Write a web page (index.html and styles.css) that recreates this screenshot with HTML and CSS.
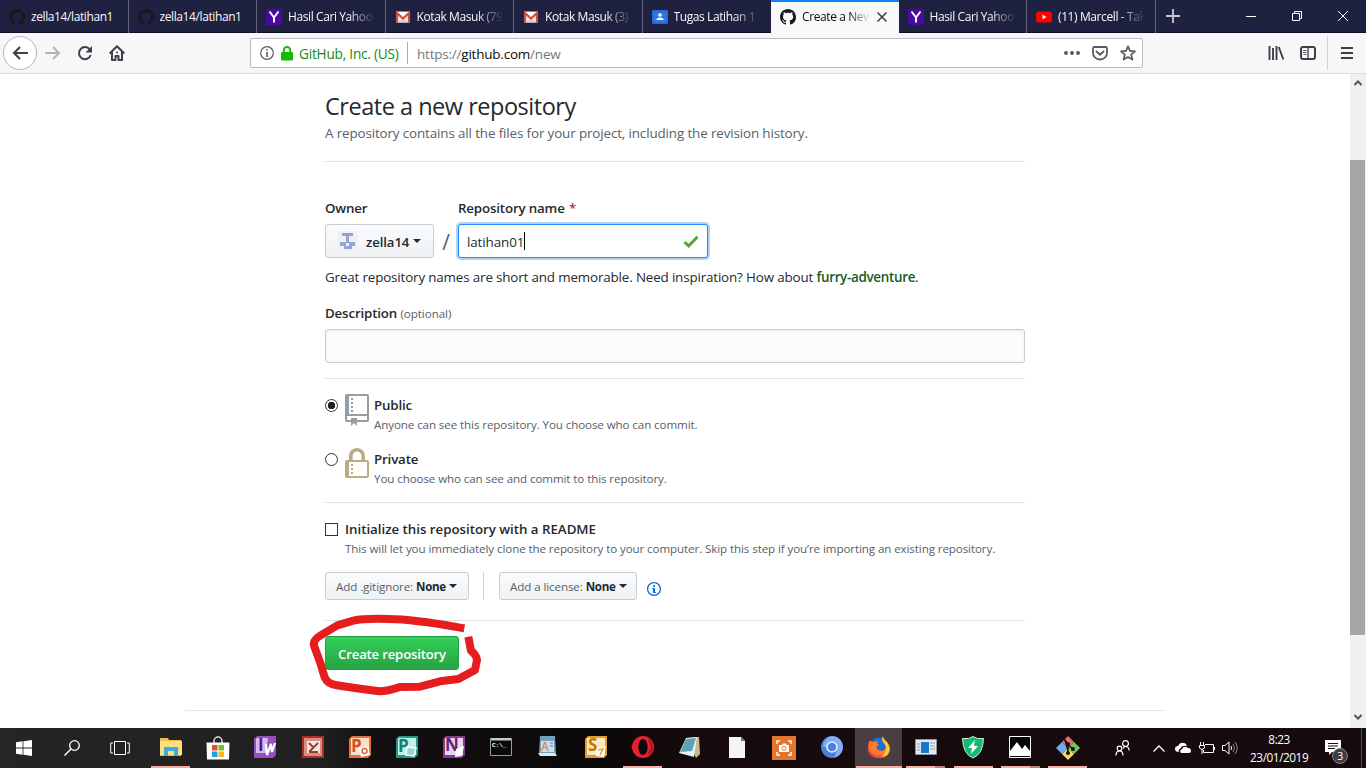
FILE: index.html
```html
<!DOCTYPE html>
<html lang="en">
<head>
<meta charset="utf-8">
<title>Create a New Repository</title>
<link rel="stylesheet" href="styles.css">
</head>
<body>
<svg class="defs" width="0" height="0">
  <symbol id="mark" viewBox="0 0 16 16"><path d="M8 0C3.58 0 0 3.58 0 8c0 3.54 2.29 6.53 5.47 7.59.4.07.55-.17.55-.38 0-.19-.01-.82-.01-1.49-2.01.37-2.53-.49-2.69-.94-.09-.23-.48-.94-.82-1.13-.28-.15-.68-.52-.01-.53.63-.01 1.08.58 1.23.82.72 1.21 1.87.87 2.33.66.07-.52.28-.87.51-1.07-1.78-.2-3.64-.89-3.64-3.95 0-.87.31-1.59.82-2.15-.08-.2-.36-1.02.08-2.12 0 0 .67-.21 2.2.82.64-.18 1.32-.27 2-.27.68 0 1.36.09 2 .27 1.53-1.04 2.2-.82 2.2-.82.44 1.1.16 1.92.08 2.12.51.56.82 1.27.82 2.15 0 3.07-1.87 3.75-3.65 3.95.29.25.54.73.54 1.48 0 1.07-.01 1.93-.01 2.2 0 .21.15.46.55.38A8.013 8.013 0 0 0 16 8c0-4.42-3.58-8-8-8z"/></symbol>
  <symbol id="yahoo" viewBox="0 0 16 16"><path fill="#4b0a9e" d="M0 0h16v16H0z"/><path d="M3.500 2.500 8 8.500l4.500-6M8 8v5.500" fill="none" stroke="#fff" stroke-width="1.900"/></symbol>
  <symbol id="gmail" viewBox="0 0 16 16"><path fill="#ececec" d="M1 2.500h14v11H1z"/><path fill="#fff" d="m1 3 7 6 7-6z"/><path fill="#d5d5d5" d="m3 13.500 5-5 5 5z"/><path d="M2 13.500V4l6 5.500L14 4v9.500" fill="none" stroke="#d54b3d" stroke-width="2.200"/></symbol>
</svg>

<header class="tabs">
  <div class="tab"><svg class="fav dark"><use href="#mark"/></svg><span class="tab-title full">zella14/latihan1</span></div>
  <div class="tab"><svg class="fav dark"><use href="#mark"/></svg><span class="tab-title full">zella14/latihan1</span></div>
  <div class="tab"><svg class="fav"><use href="#yahoo"/></svg><span class="tab-title">Hasil Cari Yahoo</span></div>
  <div class="tab"><svg class="fav"><use href="#gmail"/></svg><span class="tab-title">Kotak Masuk (79)</span></div>
  <div class="tab"><svg class="fav"><use href="#gmail"/></svg><span class="tab-title">Kotak Masuk (3)</span></div>
  <div class="tab last"><svg class="fav" viewBox="0 0 16 16"><rect y="1" width="16" height="14" rx="1.500" fill="#3367d6"/><rect x="2" y="3" width="12" height="10" fill="#2a7be8"/><circle cx="8" cy="6" r="1.800" fill="#fff"/><path fill="#fff" d="M4.300 11c0-3.500 7.400-3.500 7.400 0z"/></svg><span class="tab-title">Tugas Latihan 1</span></div>
  <div class="tab active"><svg class="fav dark"><use href="#mark"/></svg><span class="tab-title">Create a New</span><svg class="close" viewBox="0 0 10 10"><path d="m.5.5 9 9m0-9-9 9" stroke="#3c3c40" stroke-width="1.500"/></svg></div>
  <div class="tab"><svg class="fav"><use href="#yahoo"/></svg><span class="tab-title">Hasil Cari Yahoo</span></div>
  <div class="tab"><svg class="fav" viewBox="0 0 16 16"><rect y="2.500" width="16" height="11" rx="2.500" fill="#f00"/><path fill="#fff" d="m6.500 5.500 4 2.500-4 2.500z"/></svg><span class="tab-title">(11) Marcell - Tak</span></div>
  <svg class="plus" viewBox="0 0 14 14"><path d="M7 0v14M0 7h14" stroke="#c9c9d4" stroke-width="1.800"/></svg>
  <div class="window-buttons">
    <svg viewBox="0 0 12 12"><path d="M1 6.500h10" stroke="#fff"/></svg>
    <svg viewBox="0 0 12 12"><path d="M1.500 3.500h7v7h-7zM3.500 3.500v-2h7v7h-2" fill="none" stroke="#fff"/></svg>
    <svg viewBox="0 0 12 12"><path d="m1 1 10 10m0-10L1 11" stroke="#fff"/></svg>
  </div>
</header>

<nav class="toolbar">
  <span class="back"><svg width="16" height="14" viewBox="0 0 16 14"><path d="M16 7H2M8 1 2 7l6 6" fill="none" stroke="#3f3f44" stroke-width="2"/></svg></span>
  <svg class="forward" width="16" height="14" viewBox="0 0 16 14"><path d="M0 7h14M8 1l6 6-6 6" fill="none" stroke="#b5b5b8" stroke-width="2"/></svg>
  <svg class="reload" width="16" height="16" viewBox="0 0 16 16"><path d="M12.800 4.500A6 6 0 1 0 13.700 10" fill="none" stroke="#3f3f44" stroke-width="2"/><path d="M15 1v6.500H8.500z" fill="#3f3f44"/></svg>
  <svg class="home" width="16" height="16" viewBox="0 0 16 16"><path d="M.7 8.500 8 1.200l7.300 7.300M3 7v8h3.500v-4h3v4H13V7" fill="none" stroke="#3f3f44" stroke-width="2" stroke-linejoin="round"/><circle cx="8" cy="7.500" r="1" fill="#3f3f44"/></svg>
  <div class="urlbar">
    <svg class="site-info" width="14" height="14" viewBox="0 0 14 14"><circle cx="7" cy="7" r="6.300" fill="none" stroke="#5b5b5f" stroke-width="1.200"/><path d="M7 6v5M7 3v1.600" stroke="#5b5b5f" stroke-width="1.600"/></svg>
    <svg class="padlock" width="12" height="15" viewBox="0 0 12 15"><path d="M2.800 7V4.300a3.200 3.200 0 0 1 6.400 0V7" fill="none" stroke="#12bc00" stroke-width="2"/><rect y="6" width="12" height="8.500" rx="1.300" fill="#12bc00"/></svg>
    <span class="identity">GitHub, Inc. (US)</span>
    <span class="url">https://<b>github.com</b>/new</span>
    <svg class="dots" width="16" height="4" viewBox="0 0 16 4"><g fill="#5b5b5f"><circle cx="2" cy="2" r="2"/><circle cx="8" cy="2" r="2"/><circle cx="14" cy="2" r="2"/></g></svg>
    <svg class="pocket" width="16" height="15" viewBox="0 0 16 15"><path d="M2.500 1h11Q15 1 15 2.500V7A7 6.500 0 0 1 1 7V2.500Q1 1 2.500 1z" fill="none" stroke="#5b5b5f" stroke-width="1.800"/><path d="m4.500 5.500 3.500 3.300 3.500-3.300" fill="none" stroke="#5b5b5f" stroke-width="1.900" stroke-linecap="round"/></svg>
    <svg class="star" width="16" height="16" viewBox="0 0 16 16"><path d="m8 1.300 2 4.600 5 .5-3.800 3.300 1.200 4.900L8 12l-4.400 2.600 1.200-4.900L1 6.400l5-.5z" fill="none" stroke="#5b5b5f" stroke-width="1.700" stroke-linejoin="round"/></svg>
  </div>
  <svg class="library" width="16" height="14" viewBox="0 0 16 14"><path d="M1.500 0v14M5 2v12M8.500 0v14M10.800 1l4.500 12.500" stroke="#3f3f44" stroke-width="1.900"/></svg>
  <svg class="sidebar" width="16" height="14" viewBox="0 0 16 14"><rect x="1" y="1" width="14" height="12" rx="2" fill="none" stroke="#3f3f44" stroke-width="2"/><path d="M8 1v12" stroke="#3f3f44" stroke-width="1.300"/><path d="M3 4.500h3.500M3 6.500h3.500M3.500 8.500h3" stroke="#3f3f44" stroke-width=".8"/></svg>
  <span class="menu"><svg width="12" height="12" viewBox="0 0 12 12"><path d="M0 1h12M0 6h12M0 11h12" stroke="#3f3f44" stroke-width="2"/></svg></span>
</nav>

<div class="viewport">
  <main class="page">
    <div class="column">
      <h1 class="title">Create a new repository</h1>
      <p class="lead">A repository contains all the files for your project, including the revision history.</p>
      <div class="rule rule-head"></div>

      <div class="name-row">
        <div class="owner">
          <label class="label">Owner</label>
          <div class="btn owner-btn"><svg width="20" height="20" viewBox="0 0 20 20"><path fill="#f0f0f0" d="M0 0h20v20H0z"/><path fill="#95a3dc" d="M4 2h11v3h-4v6h6v4h-3v3H6v-3H2v-4h6V5H4z"/><path fill="#f0f0f0" d="M8 12h3v3H8z"/></svg><span>zella14</span><i class="caret"></i></div>
        </div>
        <span class="slash">/</span>
        <div class="repo">
          <label class="label repo-label">Repository name <em>*</em></label>
          <div class="field focus"><span class="value">latihan01</span><i class="cursor"></i><svg class="tick" width="16" height="13" viewBox="0 0 16 13"><path d="m1.500 7 4.200 4L14.500 1.700" fill="none" stroke="#55a532" stroke-width="3"/></svg></div>
        </div>
      </div>
      <p class="note">Great repository names are short and memorable. Need inspiration? How about <b>furry-adventure</b>.</p>

      <label class="label desc-label">Description <small>(optional)</small></label>
      <div class="field desc"></div>
      <div class="rule rule-desc"></div>

      <div class="option">
        <i class="radio checked"></i>
        <svg class="kind" viewBox="0 0 12 16"><path fill="#959da5" d="M4 9H3V8h1v1zm0-3H3v1h1V6zm0-2H3v1h1V4zm0-2H3v1h1V2zm8-1v12c0 .55-.45 1-1 1H6v2l-1.500-1.500L3 16v-2H1c-.55 0-1-.45-1-1V1c0-.55.45-1 1-1h10c.55 0 1 .45 1 1zm-1 10H1v2h2v-1h3v1h5v-2zm0-10H2v9h9V1z"/></svg>
        <div><div class="opt-title">Public</div><p class="hint">Anyone can see this repository. You choose who can commit.</p></div>
      </div>
      <div class="option second">
        <i class="radio"></i>
        <svg class="kind" viewBox="0 0 12 16"><path fill="#b9ab82" d="M4 13H3v-1h1v1zm8-6v7c0 .55-.45 1-1 1H1c-.55 0-1-.45-1-1V7c0-.55.45-1 1-1h1V4c0-2.200 1.800-4 4-4s4 1.800 4 4v2h1c.55 0 1 .45 1 1zM3.800 6h4.410V4c0-1.220-.98-2.200-2.200-2.200-1.220 0-2.200.98-2.200 2.200v2H3.800zM11 7H2v7h9V7zM4 8H3v1h1V8zm0 2H3v1h1v-1z"/></svg>
        <div><div class="opt-title">Private</div><p class="hint">You choose who can see and commit to this repository.</p></div>
      </div>
      <div class="rule rule-options"></div>

      <div class="readme">
        <i class="checkbox"></i>
        <div><div class="opt-title">Initialize this repository with a README</div><p class="hint">This will let you immediately clone the repository to your computer. Skip this step if you’re importing an existing repository.</p></div>
      </div>
      <div class="extras">
        <div class="btn small ignore"><span>Add .gitignore:</span> <b>None</b><i class="caret"></i></div>
        <i class="bar"></i>
        <div class="btn small license"><span>Add a license:</span> <b>None</b><i class="caret"></i></div>
        <svg class="info" viewBox="0 0 14 16"><path fill="#0366d6" d="M6.300 5.690a.942.942 0 0 1-.28-.7c0-.28.09-.52.28-.7.19-.18.42-.28.7-.28.28 0 .52.09.7.28.18.19.28.42.28.7 0 .28-.09.52-.28.7a1 1 0 0 1-.7.3c-.28 0-.52-.11-.7-.3zM8 7.990c-.02-.25-.11-.48-.31-.69-.2-.19-.42-.3-.69-.31H6c-.27.02-.48.13-.69.31-.2.2-.3.44-.31.69h1v3c.02.27.11.5.31.69.2.2.42.31.69.31h1c.27 0 .48-.11.69-.31.2-.19.3-.42.31-.69H8V7.980v.01zM7 2.300c-3.140 0-5.700 2.540-5.700 5.680 0 3.140 2.560 5.700 5.700 5.700s5.700-2.550 5.700-5.700c0-3.150-2.560-5.690-5.700-5.690v.01zM7 .98c3.860 0 7 3.140 7 7s-3.140 7-7 7-7-3.120-7-7 3.140-7 7-7z"/></svg>
      </div>
      <div class="rule rule-extras"></div>
      <div class="create">Create repository</div>
    </div>
    <div class="rule footer-rule"></div>
  </main>
  <aside class="scrollbar">
    <svg width="8" height="6" viewBox="0 0 8 6"><path d="m.5 5 3.500-3.700L7.500 5" fill="none" stroke="#505050" stroke-width="1.900"/></svg>
    <i class="thumb"></i>
    <svg width="8" height="6" viewBox="0 0 8 6"><path d="M.5 1 4 4.700 7.500 1" fill="none" stroke="#505050" stroke-width="1.900"/></svg>
  </aside>
</div>

<svg class="scribble" viewBox="0 0 600 315"><path d="M493 385C430 374 350 358 265 357Q190 355 160 362L112 376 62 406Q38 420 42 437L62 492 74 532Q82 552 110 556L180 566 238 574Q262 574 300 561L360 560 420 544 475 537 525 510 531 480Q530 466 513 452L505 410" fill="none" stroke="#e61c1d" stroke-width="24" stroke-linejoin="round"/></svg>

<footer class="taskbar">
  <span class="sys"><svg width="16" height="16" viewBox="0 0 16 16"><path fill="#fff" d="m0 2.200 6.600-.9v6.300H0zM7.400 1.200 16 0v7.600H7.400zM0 8.400h6.600v6.300L0 13.800zM7.400 8.400H16V16l-8.600-1.200z"/></svg></span>
  <span class="sys"><svg width="16" height="16" viewBox="0 0 16 16"><circle cx="10.500" cy="5.500" r="4.800" fill="none" stroke="#fff" stroke-width="1.300"/><path d="M7 9 .5 15.500" stroke="#fff" stroke-width="1.400"/></svg></span>
  <span class="sys"><svg width="20" height="14" viewBox="0 0 20 14"><path d="M4.500.5h11v13h-11zM3 2H.7v10H3M17 2h2.300v10H17" fill="none" stroke="#fff"/></svg></span>
  <div class="apps">
    <span class="app open"><svg viewBox="0 0 22 22"><path fill="#f0bd44" d="M0 2h8l1 2h12v16H0z"/><path fill="#fbdf83" d="M0 5h22v14H0z"/><path fill="#3fa9d8" d="M4 11h14v9h-4v-5H8v5H4z"/></svg></span>
    <span class="app"><svg class="store" viewBox="0 0 24 24"><path d="M8 7V5a4 4 0 0 1 8 0v2" fill="none" stroke="#ddd" stroke-width="1.500"/><path fill="#fff" d="M.5 6.500h23l-.5 17H1z"/><path fill="#e94f26" d="M6 9h5.500v5.500H6z"/><path fill="#7fb928" d="M12.500 9H18v5.500h-5.500z"/><path fill="#1ba1e2" d="M6 15.500h5.500V21H6z"/><path fill="#fdb913" d="M12.500 15.500H18V21h-5.500z"/></svg></span>
    <span class="app"><svg viewBox="0 0 22 22"><path fill="#9550bd" d="M3 0h19v19l-3 3H0V3z"/><path fill="#dab6ef" d="M2 2h12l-2 15H2z"/><text x="4" y="15" class="ico" fill="#4b1d80">I</text><path d="m12 8 1 11 4-11 1 8 3-9" fill="none" stroke="#fff" stroke-width="2.200"/></svg></span>
    <span class="app"><svg viewBox="0 0 22 22"><path fill="#ad2f2a" d="M0 0h22v22H0z"/><path fill="#d98c84" d="M2 2h18v18H2z"/><path fill="#f6e4df" d="M5 5h13v12H5z"/><path d="m7 7 4 4m-4 5 9-9M7 16h9" stroke="#a9322c" stroke-width="1.800"/></svg></span>
    <span class="app"><svg viewBox="0 0 22 22"><path fill="#e4703a" d="M3 0h19v19l-3 3H0V3z"/><path fill="#fbe0cf" d="M2 2h18v17H2z"/><text x="2" y="16" class="ico" fill="#d3511a">P</text><path d="m10 12 9-2 2 9-9 2z" fill="#fff"/><circle cx="15.500" cy="15" r="2.500" fill="none" stroke="#e0683a" stroke-width="1.500"/></svg></span>
    <span class="app"><svg viewBox="0 0 22 22"><path fill="#1b9a88" d="M3 0h19v19l-3 3H0V3z"/><path fill="#c4eee4" d="M2 2h18v17H2z"/><text x="2" y="16" class="ico" fill="#0e8277">P</text><path d="m11 11 9 1-2 8-8-1z" fill="#8fd8ca" stroke="#fff" stroke-width="1.500"/></svg></span>
    <span class="app"><svg viewBox="0 0 22 22"><path fill="#843b93" d="M3 0h19v19l-3 3H0V3z"/><path fill="#ead4f0" d="M2 2h18v17H2z"/><text x="2" y="15" class="ico" fill="#632473">N</text><path d="m13 13 8-3-2 10-7 1z" fill="#fff"/></svg></span>
    <span class="app"><svg viewBox="0 0 22 22"><path fill="#090909" stroke="#999" d="M.5 2.500h21v17H.5z"/><path fill="#c9c9c9" d="M1 2h20v2.500H1z"/><text x="2" y="11" class="prompt" fill="#fff">C:\_</text></svg></span>
    <span class="app"><svg viewBox="0 0 22 22"><path fill="#759ebf" d="M3 0h15l1 18H2z"/><path fill="#c9e1f2" d="M4 5h13v11H4z"/><path fill="#dde8ef" d="M1 17h17l2 3H3z"/><text x="4" y="15" class="letter" fill="#dc8b41">A</text><path d="M13 7h3M13 10h3" stroke="#5485b0"/></svg></span>
    <span class="app"><svg viewBox="0 0 22 22"><path fill="#e59b25" d="M3 0h19v19l-3 3H0V3z"/><path fill="#fde9bf" d="M2 2h18v17H2z"/><text x="3" y="15" class="ico" fill="#c87600">S</text><path d="m12 12 9-2-2 11-8-1z" fill="#fff"/><path d="m13 14 5-1-3 6" fill="none" stroke="#e8a33c" stroke-width="1.500"/></svg></span>
    <span class="app open"><svg viewBox="0 0 22 22"><path fill="#e5222e" fill-rule="evenodd" d="M11 0a11 11 0 1 0 0 22 11 11 0 0 0 0-22zM11 3c3 0 4.600 4 4.600 8S14 19 11 19s-4.600-4-4.600-8S8 3 11 3z"/><path d="M16.500 3.500q7 7.500 0 15" fill="none" stroke="#a40f22" stroke-width="1.600"/></svg></span>
    <span class="app"><svg viewBox="0 0 22 22"><path fill="#c9b98a" d="m8 2 12-1 1 17-4 4z"/><path fill="#e5f4f6" d="m7 2 11-1-3 20-15-4z"/><path fill="#5ea3b2" d="m7 3 10-1-4 13-12 1z"/></svg></span>
    <span class="app"><svg viewBox="0 0 22 22"><path fill="#f5f5f5" d="M3 1h12l4 4v17H3z"/><path fill="#777" d="M15 1v4h4z"/></svg></span>
    <span class="app"><svg class="store" viewBox="0 0 24 24"><path fill="#e3762c" d="M0 0h24v24H0z"/><path d="M5 8V5h3m8 0h3v3m0 8v3h-3m-8 0H5v-3" fill="none" stroke="#fff" stroke-width="1.400"/><path fill="#fff" d="M7 9h3l1-1.500h3L15 9h2v7H7z"/><circle cx="12" cy="12.400" r="2" fill="#fff" stroke="#e3762c"/></svg></span>
    <span class="app"><svg viewBox="0 0 22 22"><circle cx="11" cy="11" r="11" fill="#4c80dc"/><path fill="#83aef3" d="M11 0a11 11 0 0 1 2 21.800L17 11H2A11 11 0 0 1 11 0z"/><circle cx="11" cy="11" r="5" fill="#4c7fdd" stroke="#e6effc" stroke-width="1.600"/></svg></span>
    <span class="app open current"><svg viewBox="0 0 22 22"><circle cx="11" cy="10" r="8.500" fill="#1b6fd0"/><path fill="#ff7a2b" d="M2 4q1 2 4 2 2-1 4-1-2 2 1 4-3 1-2 4 3 3 7 1 3-3 2-8 4 3 4 7c0 6-5 9-11 9S0 18 0 12q0-5 2-8z"/><path fill="#f83d50" d="M2 4q-3 10 3 14 6 3 11 0-3 4-7 4Q0 20 0 12q0-5 2-8z"/><path fill="#ffc93a" d="M15 0q0 3 4 6 5 7 0 13-3 2-5 1 4-3 4-8 0-3-3-6-2-3 0-6z"/></svg></span>
    <span class="app open multi"><svg viewBox="0 0 22 22"><path fill="#e5e8eb" stroke="#8c959b" d="M.5 3.500h21v15H.5z"/><path fill="#1779cb" d="M6 6h8v11H6z"/><path d="M2 8h3M2 11h3M2 14h3m10-7h5m-5 3h5m-5 3h5" stroke="#929fa8"/></svg></span>
    <span class="app open"><svg viewBox="0 0 22 22"><path fill="#16b973" stroke="#c1f3dc" d="M11 .5q4 3 10.500 2Q21 18 11 22 1 18 .5 2.500 7 3.500 11 .5z"/><path fill="#fff" d="M13 4 6 12h4l-1 6 7-8h-4z"/></svg></span>
    <span class="app open multi"><svg viewBox="0 0 22 22"><path fill="#050505" stroke="#fff" d="M.5.500h21v21H.5z"/><path fill="#fff" d="m1 15 7-9 5 7 3-4 5 6v5H1z"/></svg></span>
    <span class="app open"><svg class="store" viewBox="0 0 24 24"><path fill="#ed6c70" d="m12 0 6 6-6 6-6-6z"/><path fill="#71a9f5" d="m6 6 6 6-6 6-6-6z"/><path fill="#77c957" d="m18 6 6 6-6 6-6-6z"/><path fill="#f7d85c" d="m12 12 6 6-6 6-6-6z"/><path d="m8 3 4 5v9M12 9l5 4" stroke="#141414" stroke-width="1.500"/><g fill="#141414"><circle cx="12" cy="8" r="2"/><circle cx="12" cy="17" r="2"/><circle cx="17" cy="13" r="2"/></g></svg></span>
  </div>
  <div class="tray">
    <svg class="people" width="16" height="16" viewBox="0 0 16 16"><g fill="none" stroke="#fff" stroke-width="1.200"><circle cx="10.500" cy="3.500" r="2.900"/><circle cx="4.500" cy="8.500" r="2.300"/><path d="M1 15.500q0-4.500 3.500-4.500T8 15.500M8 8.500q1-2 2.500-2 3.500 0 3.500 4"/></g></svg>
    <svg class="up" width="12" height="7" viewBox="0 0 12 7"><path d="m.5 6.500 5.500-5.500 5.500 5.500" fill="none" stroke="#fff" stroke-width="1.300"/></svg>
    <svg class="cloud" width="16" height="12" viewBox="0 0 16 12"><path fill="#fff" d="M4 10Q0 10 0 7q0-3 3-3Q5 0 9 1q2 0 3 3-5-1-7 3-2 0-1 3zM6 11q-2-3 1-4 2-4 6-1 3 0 3 3 0 2-2 2z"/></svg>
    <svg class="battery" width="16" height="12" viewBox="0 0 16 12"><path d="M6 2.500h8.500v8H4.500V8M15.500 5v3M1.500 0v3m3-3v3M.5 3.500h5V6L3 7.500.5 6zM3 7v5" fill="none" stroke="#fff"/></svg>
    <svg class="sound" width="17" height="14" viewBox="0 0 17 14"><path d="M.5 4.500H3l4-3.500v12L3 9.500H.5z" fill="none" stroke="#fff"/><path d="M9 5q1.500 2 0 4" fill="none" stroke="#fff"/><path d="M11 3q3 4 0 8m2-10q4.500 6 0 12" fill="none" stroke="#888"/></svg>
    <div class="clock"><span>8:23</span><span>23/01/2019</span></div>
    <div class="notify"><svg width="16" height="16" viewBox="0 0 16 16"><path fill="#fff" d="M0 0h16v12H7l-3 3v-3H0z"/><path d="M3 3.500h10M3 6h10M3 8.500h7" stroke="#111"/></svg><span class="badge">3</span></div>
    <i class="peek"></i>
  </div>
</footer>
</body>
</html>
```

FILE: styles.css
```css
* { box-sizing: border-box; }
body { margin: 0; width: 1366px; height: 768px; overflow: hidden; background: #fff; color: #24292e; font-family: "Open Sans", "Noto Sans", sans-serif; font-size: 13px; display: flex; flex-direction: column; position: relative; }
p, h1 { margin: 0; font-weight: 400; white-space: nowrap; }
svg { flex: none; display: block; overflow: visible; }
i, em { font-style: normal; }
.defs { position: absolute; }

.tabs { flex: none; height: 33px; background: #1f2140; border-bottom: 1px solid #0d0e24; display: flex; align-items: center; color: #f9f9fa; }
.tab { width: 128.500px; height: 33px; flex: none; padding: 2px 8px 0 9px; display: flex; align-items: center; gap: 6px; border-right: 1px solid #65667b; }
.tab.last { border-right-color: transparent; }
.tab.active { background: #f9f9fb; color: #0c0c0d; border: 0; border-top: 2px solid #0a84ff; padding-top: 0; padding-right: 12px; width: 127.500px; }
.fav { width: 16px; height: 16px; }
.dark { fill: #18191d; }
.tab-title { flex: 1; min-width: 0; overflow: hidden; white-space: nowrap; font-size: 12px; letter-spacing: -.4px; line-height: 18px; -webkit-mask-image: linear-gradient(90deg, #000 68%, transparent 98%); mask-image: linear-gradient(90deg, #000 68%, transparent 98%); }
.tab-title.full { -webkit-mask-image: none; mask-image: none; }
.close { width: 10px; height: 10px; }
.plus { width: 14px; height: 14px; margin-left: 10px; }
.window-buttons { margin-left: auto; margin-right: 17px; display: flex; gap: 34px; }
.window-buttons svg { width: 12px; height: 12px; }

.toolbar { flex: none; height: 41px; background: #f7f7f9; border-bottom: 1px solid #dcdcde; display: flex; align-items: center; padding-left: 3px; }
.back { width: 34px; height: 34px; border: 1px solid #b4b4b7; border-radius: 50%; background: #fff; display: flex; align-items: center; justify-content: center; }
.forward { margin-left: 8px; }
.reload { margin-left: 16px; }
.home { margin-left: 16px; }
.urlbar { margin-left: 125px; width: 893px; height: 30px; background: #fff; border: 1px solid #bababc; border-radius: 2px; display: flex; align-items: center; padding: 0 6px 0 9px; white-space: nowrap; }
.padlock { margin-left: 7px; }
.identity { margin-left: 6px; width: 109px; height: 22px; line-height: 24px; border-right: 1px solid #84ce84; color: #138a13; font-size: 13.600px; letter-spacing: -.2px; }
.url { margin-left: 9px; padding-top: 2px; color: #77777b; font-size: 13.500px; letter-spacing: -.22px; }
.url b { color: #0c0c0d; font-weight: 400; }
.dots { margin-left: auto; }
.pocket { margin-left: 12px; }
.star { margin-left: 12px; }
.library { margin-left: 125px; }
.sidebar { margin-left: 16px; }
.menu { margin-left: 11px; height: 34px; border-left: 1px solid #d5d5d8; padding-left: 13px; display: flex; align-items: center; }

.viewport { height: 654px; display: flex; }
.page { width: 1350px; }
.column { width: 700px; margin: 0 auto; padding-top: 16px; }
.rule { height: 1px; background: #dfe2e5; }
.title { font-size: 23.500px; line-height: 32px; letter-spacing: -.48px; }
.lead { margin-top: 1px; line-height: 20px; color: #586069; font-size: 13.400px; letter-spacing: -.125px; }
.rule-head { margin-top: 18px; }
.name-row { display: flex; align-items: flex-end; margin-top: 36px; }
.label, .opt-title { display: block; height: 20px; line-height: 20px; font-weight: 600; font-size: 13.300px; letter-spacing: -.15px; white-space: nowrap; }
.readme .opt-title { letter-spacing: -.02px; }
.btn, .field { height: 34px; border: 1px solid #c9cdd1; border-radius: 3px; display: flex; align-items: center; }
.owner .btn, .repo .field { margin-top: 6px; }
.btn { background: linear-gradient(#fafbfc, #eff3f6 90%); font-weight: 600; }
.owner-btn { width: 109px; padding-left: 12px; font-size: 13.200px; letter-spacing: -.1px; }
.owner-btn span { margin-left: 8px; padding-top: 1px; }
.caret { border: 4px solid transparent; border-top-color: #24292e; border-bottom: 0; margin-left: 4px; }
.slash { width: 24px; text-align: center; font-size: 21px; line-height: 31px; color: #586069; }
.repo-label em { color: #cb2431; margin-left: 1px; }
.field { background: #fafbfc; box-shadow: inset 0 1px 2px rgba(27, 31, 35, .075); }
.field.focus { width: 250px; border-color: #2188ff; background: #fff; box-shadow: 0 0 0 2px rgba(3, 102, 214, .3); padding: 0 8px; font-size: 13.400px; letter-spacing: -.1px; }
.value { padding-top: 2px; }
.cursor { width: 1px; height: 18px; background: #000; }
.tick { margin-left: auto; }
.note { margin-top: 9px; line-height: 20px; font-size: 13.400px; letter-spacing: -.155px; }
.note b { color: #165c26; font-weight: 600; letter-spacing: -.3px; }
.desc-label { margin-top: 16px; }
.desc-label small { color: #586069; font-size: 11.600px; font-weight: 400; letter-spacing: -.05px; }
.desc { margin-top: 6px; }
.rule-desc { margin-top: 15px; }
.option { display: flex; margin-top: 15px; height: 40px; }
.option.second { margin-top: 14px; }
.radio { width: 13px; height: 13px; border: 1px solid #333; border-radius: 50%; margin-top: 5px; flex: none; }
.radio.checked { background: radial-gradient(circle, #222 0 3.500px, transparent 4px); }
.kind { width: 24px; height: 32px; margin: 0 5px 0 7px; }
.option .opt-title { margin-top: 1px; }
.hint { line-height: 20px; color: #586069; font-size: 11.600px; letter-spacing: -.1px; }
.rule-options { margin-top: 14px; }
.readme { display: flex; margin-top: 16px; gap: 7px; height: 40px; }
.checkbox { width: 13px; height: 13px; border: 1px solid #333; margin-top: 4px; flex: none; }
.extras { display: flex; margin-top: 13px; height: 28px; }
.btn.small { height: 28px; font-size: 11.600px; letter-spacing: -.1px; padding-left: 10px; white-space: pre; }
.btn.small span { color: #586069; font-weight: 400; }
.btn b { font-weight: 700; margin-left: 3px; letter-spacing: -.3px; }
.small .caret { margin-left: 3px; }
.ignore { width: 144px; }
.license { width: 138px; }
.bar { width: 1px; background: #cfd3d6; margin: 0 15px 0 14px; }
.info { width: 14px; height: 16px; margin: 9px 0 0 9.500px; }
.rule-extras { margin-top: 20px; }
.create { margin-top: 15px; width: 134px; height: 34px; line-height: 35px; border-radius: 3px; text-align: center; color: #fff; font-weight: 600; font-size: 13.200px; letter-spacing: -.2px; background: linear-gradient(#34d058, #28a745 90%); border: 1px solid #269f42; white-space: nowrap; }
.footer-rule { width: 980px; margin: 40px auto 0; background: #e4e6e8; }
.scrollbar { width: 16px; background: #f0f0f0; display: flex; flex-direction: column; align-items: center; padding: 6px 0; }
.thumb { width: 15px; height: 475px; background: #a6a6a6; margin: 74px 1px 79px 0; }
.scribble { position: absolute; left: 300px; top: 500px; width: 200px; height: 105px; }

.taskbar { height: 40px; background: linear-gradient(90deg, #252525 0, #202020 320px, #141012 370px, #0b0808 600px, #160a0d 700px, #160a0d 1366px); display: flex; color: #fff; }
.sys { width: 48px; display: flex; align-items: center; justify-content: center; }
.apps { display: flex; margin-left: 3.400px; }
.app { width: 47.200px; height: 40px; padding: 8px 4px 0; display: flex; flex-direction: column; align-items: center; justify-content: space-between; }
.app svg { width: 22px; height: 22px; }
.app svg.store { width: 24px; height: 24px; }
.app.open::after { content: ""; width: 39px; height: 2px; background: #faaca3; }
.app.multi::after { background: linear-gradient(90deg, #faaca3 29px, #b77f79 29px); }
.app.current { background: #493e41; }
.app.current::after { width: 46px; }
.ico { font: 700 17px "Open Sans", sans-serif; }
.letter { font: 600 12px "Open Sans", sans-serif; }
.prompt { font: 700 6px "Liberation Mono", monospace; }
.tray { display: flex; align-items: center; margin-left: 24px; }
.up { margin-left: 22px; }
.cloud { margin-left: 10px; }
.battery { margin-left: 8px; }
.sound { margin-left: 7px; }
.clock { width: 80px; display: flex; flex-direction: column; align-items: center; font-size: 11.800px; line-height: 18px; letter-spacing: -.45px; }
.notify { position: relative; margin-left: 6px; }
.badge { position: absolute; left: 7px; top: 8px; width: 16px; height: 16px; border-radius: 50%; border: 1px solid #888; background: #3d3d3f; font-size: 10.500px; line-height: 14px; text-align: center; }
.peek { width: 1px; height: 40px; background: #544b4d; margin-left: 20px; }
```
